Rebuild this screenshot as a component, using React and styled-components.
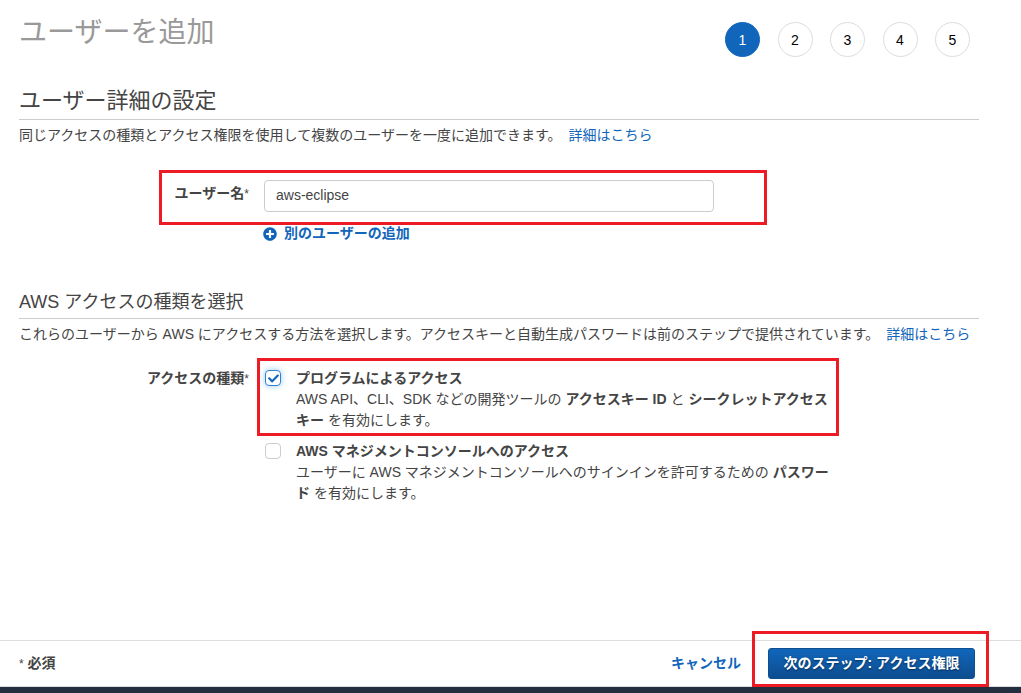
import React from 'react'
import styled, {createGlobalStyle, css} from 'styled-components'
import {FaCheck, FaPlusCircle} from 'react-icons/fa'

const GlobalStyle = createGlobalStyle`
    *,
    *::after {
        box-sizing: border-box;
    }

    body {
        margin: 0;
        background: #fff;
        color: #444;
        font-family: "Liberation Sans", "Noto Sans CJK JP", sans-serif;
        font-size: 14px;
        line-height: 21px;
    }
`

const StyledPage = styled.div`
    display: flex;
    flex-direction: column;
    min-height: 100vh;
`

const StyledMain = styled.main`
    flex: 1;
    padding: 12px 42px 24px 19px;
`

const StyledHeader = styled.header`
    display: flex;
    justify-content: space-between;
    align-items: flex-start;
    height: 75px;
`

const StyledTitle = styled.h1`
    margin: 0;
    color: #999;
    font-size: 28px;
    font-weight: 400;
    line-height: 42px;
`

const StyledSteps = styled.ol`
    display: flex;
    justify-content: space-between;
    width: 245px;
    margin: 10px 9px 0 0;
    padding: 0;
    list-style: none;
`

const StyledStep = styled.li`
    width: 35px;
    height: 35px;
    border: 1px solid ${props => props.$active ? '#1166bb' : '#ddd'};
    border-radius: 50%;
    background: ${props => props.$active ? '#1166bb' : '#fff'};
    color: ${props => props.$active ? '#fff' : '#000'};
    line-height: 35px;
    text-align: center;
`

const StyledSection = styled.section`
    margin-bottom: 43px;
`

const StyledHeading = styled.h2`
    margin: 0;
    padding-bottom: ${props => props.$small ? '1px' : '4px'};
    border-bottom: 1px solid #ccc;
    font-size: ${props => props.$small ? '18px' : '22px'};
    font-weight: 400;
    line-height: ${props => props.$small ? '30px' : '28px'};
`

const StyledText = styled.p`
    margin: 5px 0 0;

    a {
        margin-left: 3px;
    }
`

const StyledLink = styled.a`
    color: #1166bb;
    font-weight: ${props => props.$bold ? 'bold' : 'normal'};
    text-decoration: none;
`

// red frame drawn over the part of the form to look at
const marked = css`
    position: relative;

    &::after {
        content: '';
        position: absolute;
        border: 3px solid #ed1c24;
        pointer-events: none;
    }
`

const StyledRow = styled.div`
    display: grid;
    grid-template-columns: 230px minmax(0, 1fr);
    column-gap: 15px;
    margin-top: ${props => props.$top};
`

const StyledNameRow = styled(StyledRow)`
    ${marked}

    &::after {
        top: -10px;
        bottom: -13px;
        left: 140px;
        width: 608px;
    }
`

const StyledLabel = styled.label`
    padding-top: 3px;
    font-weight: bold;
    text-align: right;
`

const StyledGroupLabel = styled(StyledLabel).attrs({as: 'div'})`
    padding-top: 0;
`

const StyledStar = styled.span`
    font-size: 12px;
    font-weight: normal;
`

const StyledInput = styled.input`
    width: 100%;
    max-width: 450px;
    height: 32px;
    padding: 0 11px 2px;
    border: 1px solid #ccc;
    border-radius: 4px;
    background: #fff;
    color: #444;
    font: inherit;
`

const StyledAddButton = styled.button`
    display: flex;
    align-items: center;
    gap: 7px;
    margin: 11px 0 0 244px;
    padding: 0;
    border: 0;
    background: none;
    color: #1166bb;
    font: inherit;
    font-weight: bold;
    cursor: pointer;
`

const StyledOptions = styled.div`
    display: grid;
    gap: 10px;
`

const StyledOption = styled.div`
    display: grid;
    grid-template-columns: 32px minmax(0, 540px);

    ${props => props.$marked && css`
        ${marked}

        &::after {
            top: -10px;
            bottom: -5px;
            left: -7px;
            width: 582px;
        }
    `}
`

const StyledCheck = styled.span`
    display: grid;
    width: 16px;
    height: 16px;
    margin: 2px 0 0 1px;

    > * {
        grid-area: 1 / 1;
        place-self: center;
    }

    svg {
        color: #1166bb;
        pointer-events: none;
    }
`

const StyledCheckbox = styled.input`
    appearance: none;
    width: 16px;
    height: 16px;
    margin: 0;
    border: 1px solid #ccc;
    border-radius: 4px;
    background: #fff;

    &:checked {
        border-color: #2b83d8;
        box-shadow: 0 0 6px #9ccaf5;
    }

    &:not(:checked) + svg {
        display: none;
    }
`

const StyledOptionLabel = styled.label`
    display: block;
    font-weight: bold;
`

const StyledFooter = styled.footer`
    display: flex;
    align-items: center;
    height: 53px;
    padding: 0 46px 1px 19px;
    border-top: 1px solid #ddd;
    border-bottom: 6px solid #232f3e;
    box-shadow: inset 0 -1px #ddd;
    font-weight: bold;
`

const StyledActions = styled.div`
    display: flex;
    align-items: center;
    gap: 27px;
    margin-left: auto;
`

const StyledNext = styled.div`
    ${marked}

    &::after {
        top: -17px;
        bottom: -8px;
        left: -16px;
        right: -14px;
    }
`

const StyledButton = styled.button`
    display: block;
    min-width: 207px;
    height: 31px;
    padding: 0 14px;
    border: 1px solid #0e4f90;
    border-radius: 3px;
    background: linear-gradient(#1166bb, #0d4d8f);
    color: #fff;
    font: inherit;
    font-weight: bold;
    text-shadow: 0 1px 2px #002b55;
    cursor: pointer;
`

const steps = [1, 2, 3, 4, 5]

class App extends React.Component {
    state = {
        name: 'aws-eclipse',
        program: true,
        console: false
    }

    toggle = e => {
        this.setState({[e.target.name]: e.target.checked})
    }

    render() {
        return (
            <StyledPage>
                <GlobalStyle />
                <StyledMain>
                    <StyledHeader>
                        <StyledTitle>ユーザーを追加</StyledTitle>
                        <StyledSteps>
                            {steps.map(step => (
                                <StyledStep key={step} $active={step === 1}>{step}</StyledStep>
                            ))}
                        </StyledSteps>
                    </StyledHeader>

                    <StyledSection>
                        <StyledHeading>ユーザー詳細の設定</StyledHeading>
                        <StyledText>
                            同じアクセスの種類とアクセス権限を使用して複数のユーザーを一度に追加できます。{' '}
                            <StyledLink href="#users">詳細はこちら</StyledLink>
                        </StyledText>
                        <StyledNameRow $top="34px">
                            <StyledLabel htmlFor="name">ユーザー名<StyledStar>*</StyledStar></StyledLabel>
                            <StyledInput
                                id="name"
                                type="text"
                                value={this.state.name}
                                onChange={e => this.setState({name: e.target.value})}
                            />
                        </StyledNameRow>
                        <StyledAddButton type="button">
                            <FaPlusCircle size={14} />
                            別のユーザーの追加
                        </StyledAddButton>
                    </StyledSection>

                    <StyledSection>
                        <StyledHeading $small>AWS アクセスの種類を選択</StyledHeading>
                        <StyledText>
                            これらのユーザーから AWS にアクセスする方法を選択します。アクセスキーと自動生成パスワードは前のステップで提供されています。{' '}
                            <StyledLink href="#access">詳細はこちら</StyledLink>
                        </StyledText>
                        <StyledRow $top="23px">
                            <StyledGroupLabel id="type">アクセスの種類<StyledStar>*</StyledStar></StyledGroupLabel>
                            <StyledOptions role="group" aria-labelledby="type">
                                <StyledOption $marked>
                                    <StyledCheck>
                                        <StyledCheckbox
                                            id="program"
                                            name="program"
                                            type="checkbox"
                                            checked={this.state.program}
                                            onChange={this.toggle}
                                        />
                                        <FaCheck size={11} />
                                    </StyledCheck>
                                    <div>
                                        <StyledOptionLabel htmlFor="program">プログラムによるアクセス</StyledOptionLabel>
                                        AWS API、CLI、SDK などの開発ツールの <b>アクセスキー ID</b> と <b>シークレットアクセスキー</b> を有効にします。
                                    </div>
                                </StyledOption>
                                <StyledOption>
                                    <StyledCheck>
                                        <StyledCheckbox
                                            id="console"
                                            name="console"
                                            type="checkbox"
                                            checked={this.state.console}
                                            onChange={this.toggle}
                                        />
                                        <FaCheck size={11} />
                                    </StyledCheck>
                                    <div>
                                        <StyledOptionLabel htmlFor="console">AWS マネジメントコンソールへのアクセス</StyledOptionLabel>
                                        ユーザーに AWS マネジメントコンソールへのサインインを許可するための <b>パスワード</b> を有効にします。
                                    </div>
                                </StyledOption>
                            </StyledOptions>
                        </StyledRow>
                    </StyledSection>
                </StyledMain>

                <StyledFooter>
                    <span><StyledStar>*</StyledStar> 必須</span>
                    <StyledActions>
                        <StyledLink href="#cancel" $bold>キャンセル</StyledLink>
                        <StyledNext>
                            <StyledButton type="button">次のステップ: アクセス権限</StyledButton>
                        </StyledNext>
                    </StyledActions>
                </StyledFooter>
            </StyledPage>
        )
    }
}

export default App
